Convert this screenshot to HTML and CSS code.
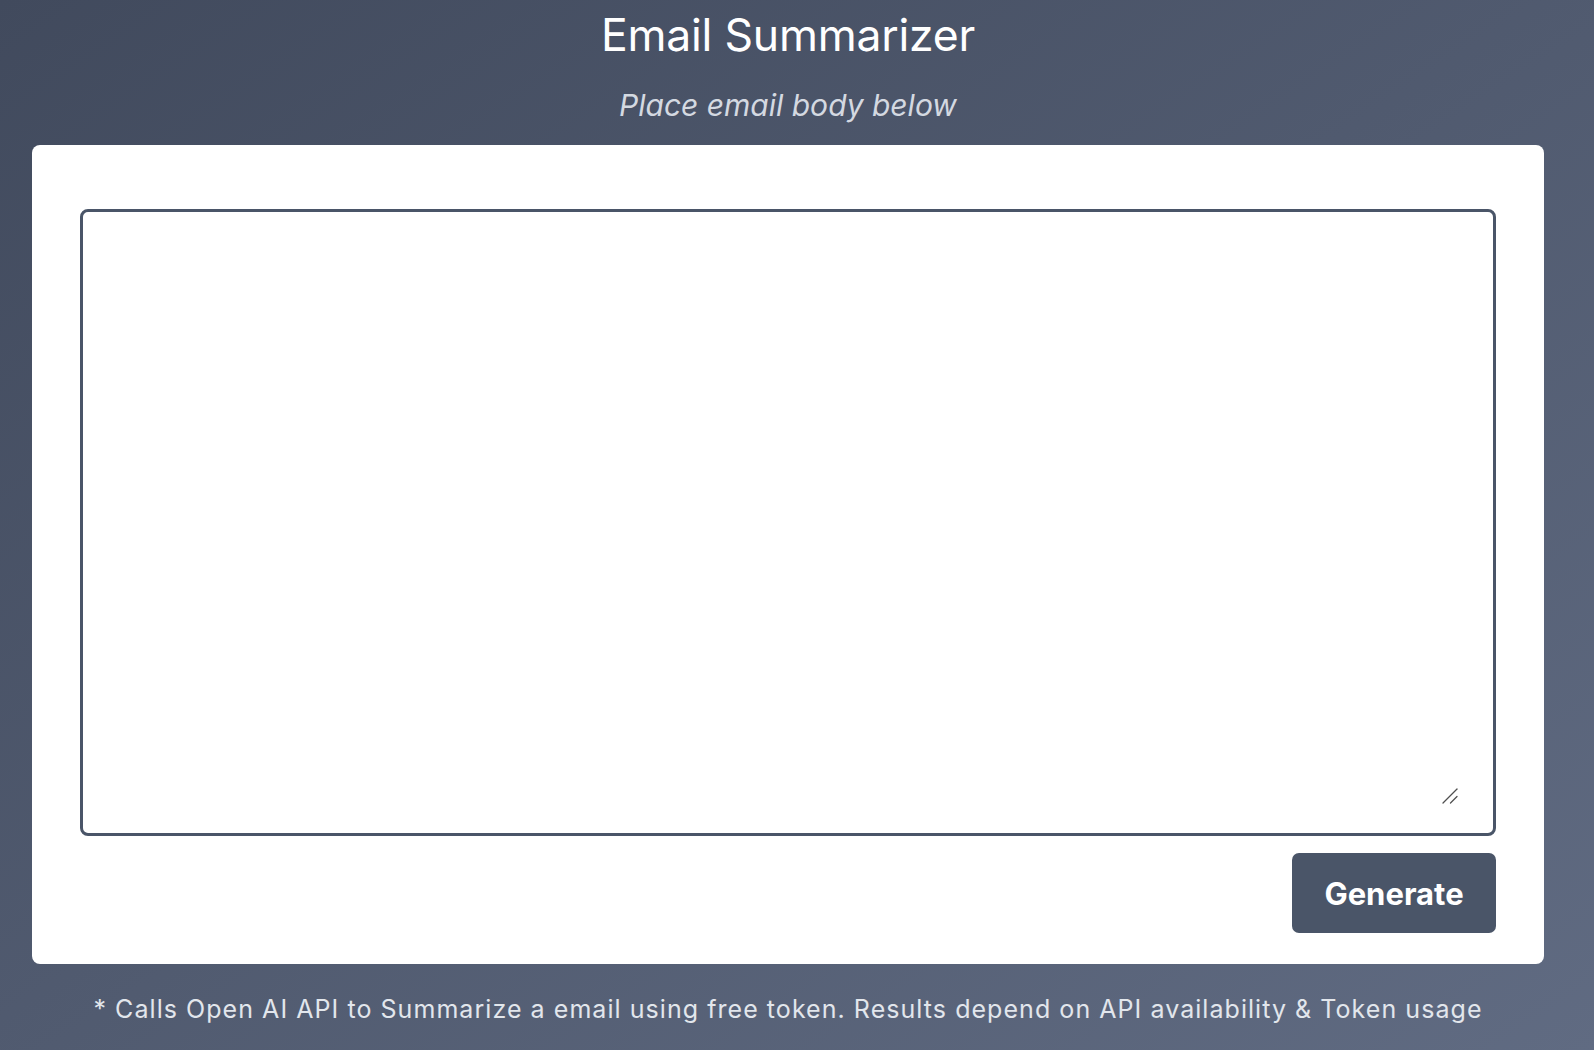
FILE: index.html
```html
<!DOCTYPE html>
<html lang="en">
<head>
<meta charset="utf-8">
<title>Email Summarizer</title>
<link rel="stylesheet" href="styles.css">
</head>
<body>
<main class="page">
  <h1 class="title">Email Summarizer</h1>
  <p class="subtitle">Place email body below</p>
  <section class="card">
    <div class="input-box">
      <textarea class="email-input"></textarea>
      <svg class="resizer" width="16" height="16" viewBox="0 0 16 16" aria-hidden="true">
        <line x1="1" y1="15" x2="15" y2="1" stroke="#4f4f4f" stroke-width="1.3" stroke-linecap="round"/>
        <line x1="8.5" y1="15" x2="15" y2="8.5" stroke="#4f4f4f" stroke-width="1.3" stroke-linecap="round"/>
      </svg>
    </div>
    <div class="actions">
      <button class="generate-btn" type="button">Generate</button>
    </div>
  </section>
  <p class="footnote">* Calls Open AI API to Summarize a email using free token. Results depend on API availability &amp; Token usage</p>
</main>
</body>
</html>
```

FILE: styles.css
```css
html, body {
  margin: 0;
  padding: 0;
  height: 100%;
}
body {
  background: linear-gradient(to bottom right, #414a5d, #606b82);
  font-family: Inter, "Liberation Sans", sans-serif;
  overflow: hidden;
}
.page {
  width: 1576px;
  display: flex;
  flex-direction: column;
  align-items: center;
  padding-top: 12px;
}
.title {
  margin: 0;
  font-size: 44.5px;
  line-height: 46px;
  font-weight: 400;
  letter-spacing: -0.2px;
  color: #ffffff;
}
.subtitle {
  margin: 32px 0 0;
  font-size: 30px;
  line-height: 30px;
  font-style: italic;
  color: #d4d9e1;
}
.card {
  box-sizing: border-box;
  margin-top: 25px;
  width: 1512px;
  background: #ffffff;
  border-radius: 8px;
  padding: 64px 48px 31px;
  display: flex;
  flex-direction: column;
}
.input-box {
  position: relative;
  box-sizing: border-box;
  height: 627px;
  border: 3px solid #4a5568;
  border-radius: 8px;
  padding: 32px 33px 31px 32px;
  display: flex;
}
.email-input {
  flex: 1;
  border: none;
  outline: none;
  resize: none;
  padding: 0;
  font-family: Inter, "Liberation Sans", sans-serif;
  font-size: 18px;
  color: #2d3748;
  background: transparent;
}
.resizer {
  position: absolute;
  right: 35px;
  bottom: 29px;
}
.actions {
  display: flex;
  justify-content: flex-end;
  margin-top: 17px;
}
.generate-btn {
  width: 204px;
  height: 80px;
  border: none;
  border-radius: 7px;
  background: #4a5568;
  color: #ffffff;
  font-family: Inter, "Liberation Sans", sans-serif;
  font-size: 31px;
  font-weight: 700;
  cursor: pointer;
}
.footnote {
  margin: 33px 0 0;
  font-size: 25px;
  line-height: 25px;
  letter-spacing: 1.05px;
  color: #e2e6ec;
}
```
